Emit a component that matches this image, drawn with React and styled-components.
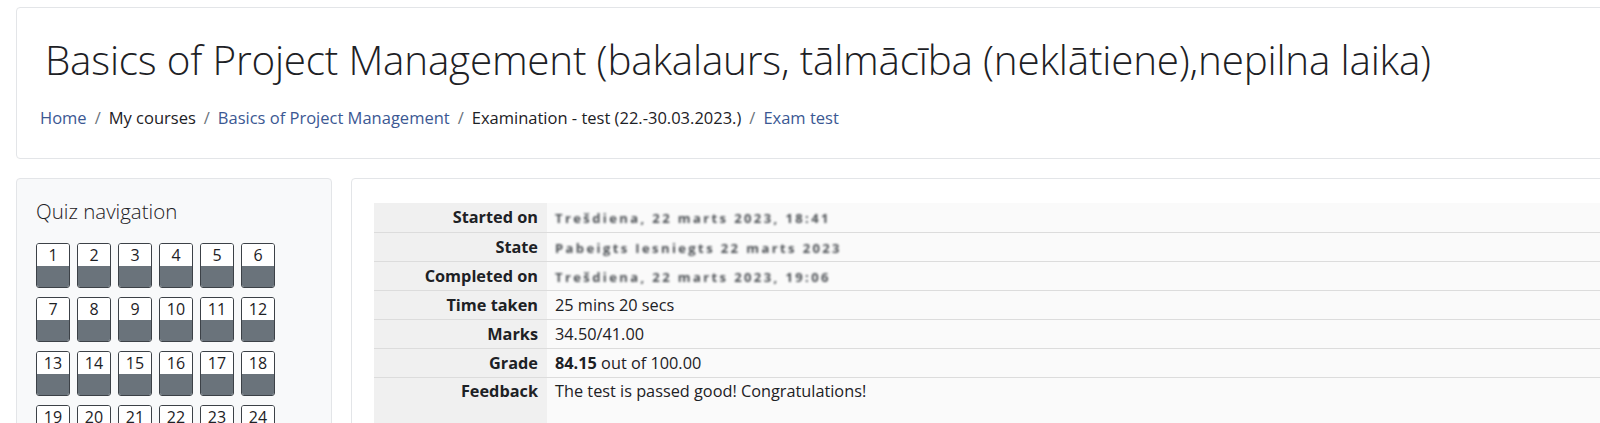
import styled, { createGlobalStyle } from "styled-components";

const GlobalStyle = createGlobalStyle`
  body {
    margin: 0;
    background: #ffffff;
    font-family: "Open Sans", "Noto Sans", sans-serif;
    color: #1d2125;
    overflow: hidden;
  }
`;

const Page = styled.div`
  width: 1680px;
  padding: 7px 0 0 16px;
  display: flex;
  flex-direction: column;
  gap: 19px;
`;

const HeaderCard = styled.header`
  box-sizing: border-box;
  height: 152px;
  border: 1px solid #e3e5e8;
  border-radius: 4px;
  padding: 28px 23px 0;
  background: #ffffff;
`;

const Title = styled.h1`
  margin: 0 0 22px 5px;
  font-size: 40.4px;
  font-weight: 300;
  line-height: 1.2;
  color: #1d2125;
  letter-spacing: -0.2px;
`;

const Crumbs = styled.nav`
  display: flex;
  align-items: center;
  font-size: 16.5px;
  line-height: 24px;
`;

const Crumb = styled.span`
  color: ${(p) => (p.$link ? "#3b5893" : "#1d2125")};
`;

const Sep = styled.span`
  color: #6a737b;
  padding: 0 8px;
`;

const Body = styled.div`
  display: flex;
  gap: 19px;
  align-items: flex-start;
`;

const NavCard = styled.aside`
  box-sizing: border-box;
  width: 316px;
  height: 300px;
  flex-shrink: 0;
  background: #f8f9fa;
  border: 1px solid #e3e5e8;
  border-radius: 4px;
  padding: 20px 19px;
`;

const NavTitle = styled.h3`
  margin: 0 0 20px;
  font-size: 20.5px;
  font-weight: 300;
  line-height: 24px;
  color: #1d2125;
`;

const ButtonGrid = styled.div`
  display: grid;
  grid-template-columns: repeat(6, 34px);
  column-gap: 7px;
  row-gap: 9px;
`;

const QButton = styled.div`
  box-sizing: border-box;
  height: 45px;
  border: 1px solid #3c4147;
  border-radius: 3px;
  overflow: hidden;
  display: flex;
  flex-direction: column;
`;

const QNum = styled.span`
  height: 22px;
  background: #ffffff;
  font-size: 16px;
  line-height: 22px;
  text-align: center;
  color: #1d2125;
`;

const QState = styled.span`
  flex: 1;
  background: #6a737b;
`;

const MainCard = styled.main`
  flex: 1;
  box-sizing: border-box;
  height: 320px;
  background: #ffffff;
  border: 1px solid #e3e5e8;
  border-radius: 4px;
  padding: 24px 0 0 22px;
`;

const Summary = styled.table`
  width: 100%;
  border-collapse: collapse;
  font-size: 16.3px;
`;

const Row = styled.tr`
  border-top: 1px solid #dcdcdc;
  &:first-child {
    border-top: none;
  }
`;

const Label = styled.th`
  width: 173px;
  box-sizing: border-box;
  height: ${(p) => (p.$tall ? "70px" : "29px")};
  padding: 0 9px 0 0;
  padding-top: ${(p) => (p.$tall ? "2px" : "0")};
  text-align: right;
  vertical-align: ${(p) => (p.$tall ? "top" : "middle")};
  font-size: 16.3px;
  font-weight: 700;
  background: #f0f0f0;
  color: #1d2125;
  white-space: nowrap;
`;

const Value = styled.td`
  padding: 0 8px;
  padding-top: ${(p) => (p.$tall ? "2px" : "0")};
  vertical-align: ${(p) => (p.$tall ? "top" : "middle")};
  background: #fafafa;
  color: #1d2125;
  white-space: nowrap;
  b {
    font-weight: 700;
  }
`;

const Blurred = styled.span`
  display: inline-block;
  filter: blur(1.2px);
  color: #2e3338;
  font-size: 13px;
  font-weight: 700;
  letter-spacing: 2.4px;
  opacity: 0.85;
`;

const crumbs = [
  { text: "Home", link: true },
  { text: "My courses" },
  { text: "Basics of Project Management", link: true },
  { text: "Examination - test (22.-30.03.2023.)" },
  { text: "Exam test", link: true },
];

const rows = [
  { label: "Started on", blur: "Trešdiena, 22 marts 2023, 18:41" },
  { label: "State", blur: "Pabeigts Iesniegts 22 marts 2023" },
  { label: "Completed on", blur: "Trešdiena, 22 marts 2023, 19:06" },
  { label: "Time taken", value: "25 mins 20 secs" },
  { label: "Marks", value: "34.50/41.00" },
  { label: "Grade", grade: true },
  { label: "Feedback", value: "The test is passed good! Congratulations!", tall: true },
];

export default function App() {
  return (
    <>
      <GlobalStyle />
      <Page>
        <HeaderCard>
          <Title>
            Basics of Project Management (bakalaurs, tālmācība (neklātiene),nepilna laika)
          </Title>
          <Crumbs>
            {crumbs.map((c, i) => (
              <span key={c.text}>
                {i > 0 && <Sep>/</Sep>}
                <Crumb $link={c.link}>{c.text}</Crumb>
              </span>
            ))}
          </Crumbs>
        </HeaderCard>
        <Body>
          <NavCard>
            <NavTitle>Quiz navigation</NavTitle>
            <ButtonGrid>
              {Array.from({ length: 24 }, (_, i) => (
                <QButton key={i}>
                  <QNum>{i + 1}</QNum>
                  <QState />
                </QButton>
              ))}
            </ButtonGrid>
          </NavCard>
          <MainCard>
            <Summary>
              <tbody>
                {rows.map((r) => (
                  <Row key={r.label}>
                    <Label $tall={r.tall}>{r.label}</Label>
                    <Value $tall={r.tall}>
                      {r.blur && <Blurred>{r.blur}</Blurred>}
                      {r.value}
                      {r.grade && (
                        <>
                          <b>84.15</b> out of 100.00
                        </>
                      )}
                    </Value>
                  </Row>
                ))}
              </tbody>
            </Summary>
          </MainCard>
        </Body>
      </Page>
    </>
  );
}
